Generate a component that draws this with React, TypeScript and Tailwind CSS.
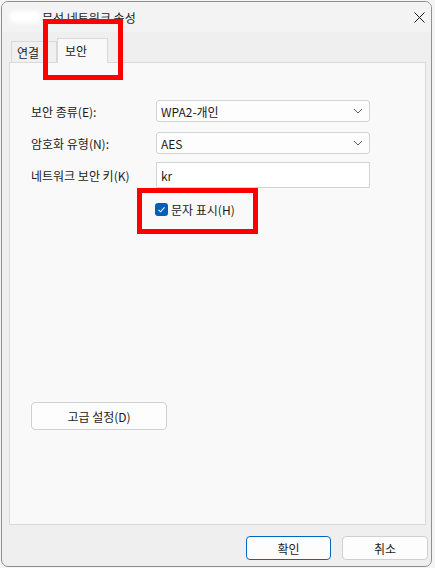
const font = { fontFamily: '"Noto Sans CJK KR", "Noto Sans", sans-serif' };

function Chevron() {
  return (
    <svg width="10" height="6" viewBox="0 0 10 6" className="mr-[4px]">
      <path d="M1 1 L5 5 L9 1" fill="none" stroke="#5f5f5f" strokeWidth="1" />
    </svg>
  );
}

function Combo({ value }: { value: string }) {
  return (
    <div className="flex h-[22px] w-[214px] items-center justify-between rounded-[3px] border border-[#d4d4d4] bg-[#fdfdfd] pl-[4px] pr-[2px]">
      <span>{value}</span>
      <Chevron />
    </div>
  );
}

export default function App() {
  return (
    <div className="relative h-[568px] w-[435px] overflow-hidden bg-[#f4f4f4] pl-[1px] pt-[1px] text-[12px] leading-[15px] text-[#1b1b1b]" style={font}>
      {/* window */}
      <div className="flex h-[566px] w-[431px] flex-col overflow-hidden rounded-[7px] border border-[#8f8f8f] bg-[#efefef]">
        {/* title bar */}
        <div className="flex h-[30px] items-center bg-[#f3f3f3]">
          <div className="ml-[7px] h-[12px] w-[32px] rounded-full bg-white blur-[2px]" />
          <span className="ml-[1px] text-[12px]">무선 네트워크 속성</span>
          <div className="ml-auto mr-[6px] flex h-[30px] w-[11px] items-center justify-center">
            <svg width="11" height="11" viewBox="0 0 11 11">
              <path d="M0.5 0.5 L10.5 10.5 M10.5 0.5 L0.5 10.5" stroke="#1b1b1b" strokeWidth="1" />
            </svg>
          </div>
        </div>

        {/* tabs */}
        <div className="ml-[7px] mt-[6px] flex items-end">
          <div className="ml-[2px] flex h-[21px] w-[46px] items-center border border-b-0 border-[#d9d9d9] bg-[#f0f0f0] pl-[5px]">연결</div>
          <div className="relative z-10 -mb-[1px] flex h-[25px] w-[51px] items-center border border-b-0 border-[#d9d9d9] bg-[#f9f9f9] pl-[7px] pb-[2px]">보안</div>
        </div>

        {/* panel */}
        <div className="ml-[7px] flex h-[463px] w-[417px] flex-col border border-[#d9d9d9] bg-[#f9f9f9] pl-[21px] pt-[37px]">
          <div className="flex items-center">
            <span className="w-[125px]">보안 종류(E):</span>
            <Combo value="WPA2-개인" />
          </div>
          <div className="mt-[10px] flex items-center">
            <span className="w-[125px]">암호화 유형(N):</span>
            <Combo value="AES" />
          </div>
          <div className="mt-[8px] flex items-center">
            <span className="w-[125px]">네트워크 보안 키(K)</span>
            <div className="flex h-[26px] w-[214px] items-center border border-[#d4d4d4] bg-white pl-[4px]">
              kr
              <div className="ml-[2px] h-[12px] w-[48px] rounded-full bg-white blur-[2px]" />
            </div>
          </div>
          <div className="ml-[124px] mt-[14px] flex items-center">
            <div className="flex h-[13px] w-[13px] items-center justify-center rounded-[3px] bg-[#005fb8]">
              <svg width="9" height="9" viewBox="0 0 9 9">
                <path d="M1.5 4.8 L3.6 6.8 L7.5 2.3" fill="none" stroke="white" strokeWidth="1.1" />
              </svg>
            </div>
            <span className="ml-[3px]">문자 표시(H)</span>
          </div>
          <button className="mt-[185px] flex h-[28px] w-[136px] items-center justify-center rounded-[4px] border border-[#d0d0d0] bg-[#fdfdfd]">
            고급 설정(D)
          </button>
        </div>

        {/* footer */}
        <div className="mt-[11px] flex justify-end gap-[11px] pr-[3px]">
          <button className="flex h-[24px] w-[85px] items-center justify-center rounded-[4px] border border-[#0067c0] bg-[#fdfdfd]">확인</button>
          <button className="flex h-[24px] w-[86px] items-center justify-center rounded-[4px] border border-[#d0d0d0] bg-[#fdfdfd]">취소</button>
        </div>
      </div>

      {/* red annotation boxes */}
      <div className="absolute left-[43px] top-[19px] h-[61px] w-[80px] border-[5px] border-[#ff0000]" />
      <div className="absolute left-[137px] top-[188px] h-[46px] w-[121px] border-[5px] border-[#ff0000]" />
    </div>
  );
}
